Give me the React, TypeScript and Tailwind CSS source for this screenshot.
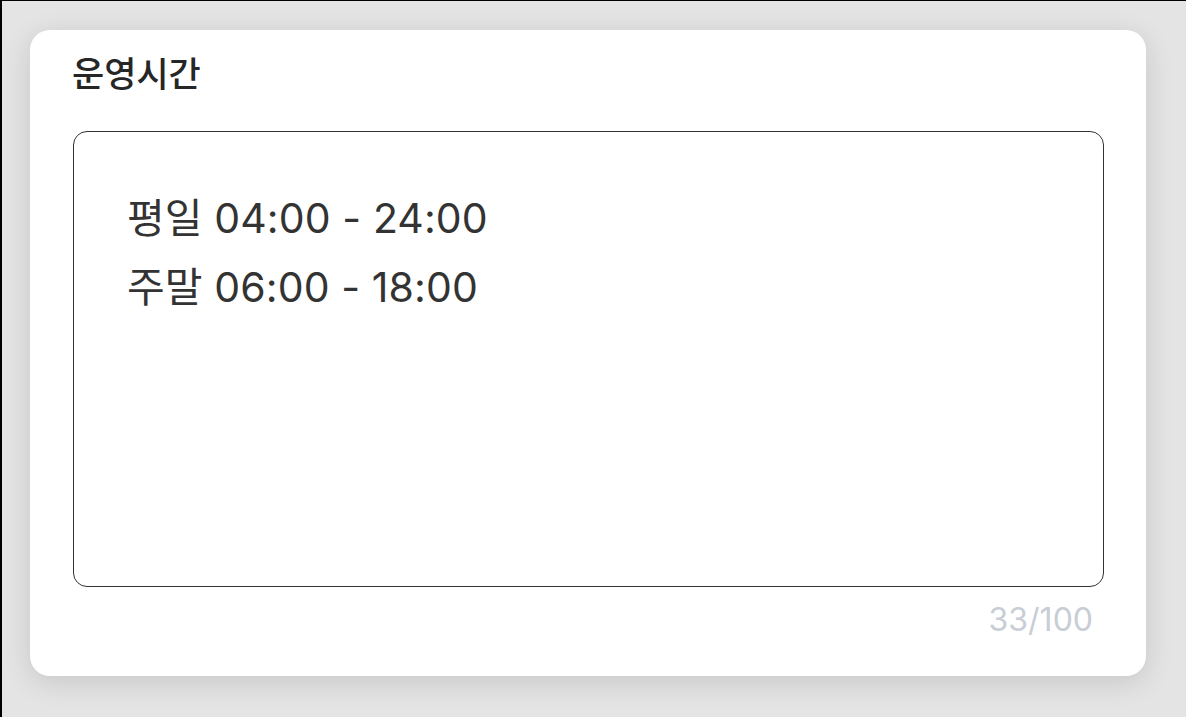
import React from 'react';

const FONT = "font-['Inter','Noto_Sans_CJK_KR',sans-serif]";

export default function App() {
    const value = '평일 04:00 - 24:00\n주말 06:00 - 18:00';

    return (
        <div className={`h-[717px] w-[1186px] overflow-hidden bg-[#e4e4e4] border-l-2 border-t border-black ${FONT}`}>
            <div className="ml-[28px] mt-[29px] w-[1116px] h-[646px] rounded-[20px] bg-white shadow-[0_6px_28px_rgba(0,0,0,0.13)] pl-[43px] pt-[24px] flex flex-col">
                {/* Title */}
                <h2 className="-ml-px text-[35px] leading-[40px] font-medium text-[#262626]">운영시간</h2>

                {/* Text area */}
                <textarea
                    readOnly
                    defaultValue={value}
                    className="mt-[37px] h-[456px] w-[1031px] resize-none rounded-[14px] border border-[#333] bg-white pl-[53px] pt-[52px] text-[41px] leading-[69px] tracking-[0.1px] text-[#333] outline-none"
                />

                {/* Counter */}
                <div className="mt-[16px] w-[1031px] pr-[11px] text-right text-[32px] leading-[34px] text-[#c9cdd5]">33/100</div>
            </div>
        </div>
    );
}
